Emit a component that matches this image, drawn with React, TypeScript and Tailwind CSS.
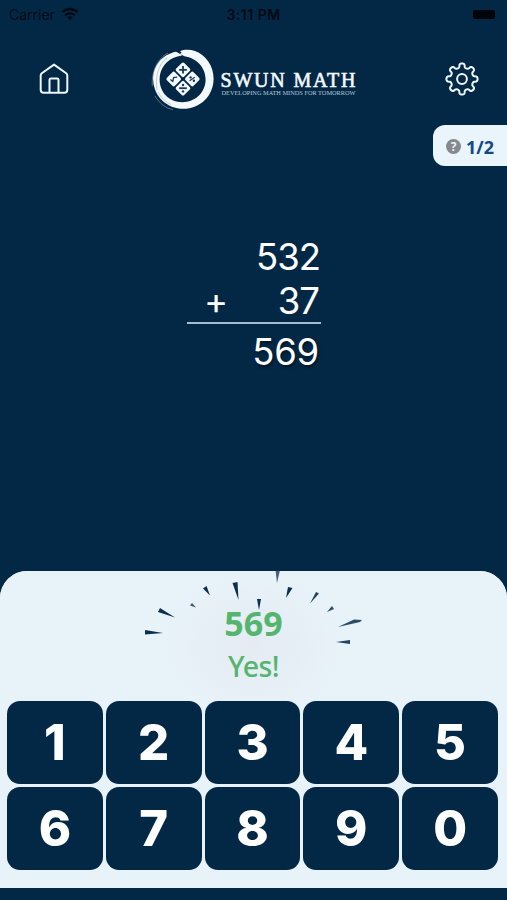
import React, { useState } from 'react';

interface Ray {
    points: string;
    opacity?: number;
}

// Burst marks around the answer, on a 250x130 canvas
const RAYS: Ray[] = [
    { points: '15,70 15,74.5 33,73' },
    { points: '30,48 28,52 45,57.5' },
    { points: '62,43 60,45.5 66,47.5', opacity: 0.8 },
    { points: '76.5,26 73,28.5 80,35.5' },
    { points: '107.5,22 102.5,23 108.5,40' },
    { points: '145.5,10 150,10 147,23', opacity: 0.75 },
    { points: '127,39 131,39 129,50' },
    { points: '158,27 162.5,28 156,38' },
    { points: '186,32 189,33.5 180,43.5', opacity: 0.9 },
    { points: '202,46 204,49 197,52', opacity: 0.85 },
    { points: '224,59.5 232,60 230,62 208,67', opacity: 0.85 },
    { points: '220,80 220,84 206,82', opacity: 0.9 },
];

const KEYS = ['1', '2', '3', '4', '5', '6', '7', '8', '9', '0'];

const gearPath = () => {
    const pts: string[] = [];
    for (let i = 0; i < 240; i++) {
        const t = (i / 240) * Math.PI * 2;
        const r = 13.5 + 2.1 * Math.cos(8 * t);
        const a = t + 0.045 * Math.sin(16 * t);
        pts.push(`${(17 + r * Math.sin(a)).toFixed(2)} ${(17 - r * Math.cos(a)).toFixed(2)}`);
    }
    return `M${pts.join('L')}Z`;
};

const HomeIcon = () => (
    <svg className="h-[34px] w-[34px]" viewBox="0 0 34 34" fill="none" stroke="#edf6fc" strokeWidth="2" strokeLinejoin="round">
        <path d="M17 2.6 29.2 11.2Q30.3 12 30.3 13.6V27.8Q30.3 30.7 27.4 30.7H6.6Q3.7 30.7 3.7 27.8V13.6Q3.7 12 4.8 11.2Z" />
        <path d="M12.5 30.5V17.8Q12.5 16.4 14 16.4H20Q21.5 16.4 21.5 17.8V30.5" />
    </svg>
);

const GearIcon = () => (
    <svg className="h-[34px] w-[34px]" viewBox="0 0 34 34" fill="none" stroke="#edf6fc" strokeWidth="2" strokeLinejoin="round">
        <path d={gearPath()} />
        <circle cx="17" cy="17" r="4.9" />
    </svg>
);

const WifiIcon = () => (
    <svg className="h-[14px] w-[18px]" viewBox="0 0 18 14" fill="none" stroke="#000a12">
        <path d="M1.2 5.2A11.2 11.2 0 0 1 16.8 5.2" strokeWidth="2.5" />
        <path d="M4.1 8.3A7 7 0 0 1 13.9 8.3" strokeWidth="2.2" />
        <path d="M6.3 10.6A3.8 3.8 0 0 1 11.7 10.6L9 13.3Z" fill="#000a12" stroke="none" />
    </svg>
);

const Logo = () => (
    <svg className="h-[64px] w-[208px]" viewBox="150 48 208 64">
        {/* Brush ring */}
        <path
            fill="#f4f9fd"
            d="M180 52.2C184 50.3 190 50.3 195 52C206 56 213.8 67 213.6 80C213.4 97 200 109.8 183.5 109.8C167 109.8 154 97.5 153.2 81.5C152.6 67 162 55.5 176 52.8L179 54.2L182 56.6L177.5 57.6C167 60 159.6 69.5 159.6 80.5C159.6 93.5 169.5 103.2 182.3 103.2C195 103.2 205.6 93.5 205.6 80.5C205.6 68.5 196.5 58.8 184.5 57.2L180 55L181.5 53.6Z"
        />
        <g fill="none" stroke="#022846" strokeWidth=".6" opacity=".35">
            <path d="M157 91C155 78 158 66 167 58.5" />
            <path d="M158 93C161 99 165.5 103 171 105.6" />
        </g>
        <g fill="none" stroke="#f4f9fd" strokeWidth=".7" opacity=".5">
            <path d="M152.3 87C151.3 74 156.5 60 168 54" />
            <path d="M155 97C159 104 166 109.5 173 110.5" />
        </g>
        <g fill="#f4f9fd">
            <rect x="-5.7" y="-5.7" width="11.4" height="11.4" rx="1.8" transform="translate(183 70.8) rotate(45)" />
            <rect x="-5.7" y="-5.7" width="11.4" height="11.4" rx="1.8" transform="translate(173.7 80) rotate(45)" />
            <rect x="-5.7" y="-5.7" width="11.4" height="11.4" rx="1.8" transform="translate(192.3 80) rotate(45)" />
            <rect x="-5.7" y="-5.7" width="11.4" height="11.4" rx="1.8" transform="translate(183 89.2) rotate(45)" />
        </g>
        <g fill="none" stroke="#16385a" strokeWidth="1.8">
            <path d="M183 67V74.6M179.2 70.8H186.8" />
            <path d="M170.4 80.4 172.8 82.4 173.6 78.6 177.2 78.2" strokeWidth="1.3" />
            <path d="M189.6 81.8 194.8 78.2" strokeWidth="1.2" />
            <path d="M179.2 89.2H186.8" />
        </g>
        <g fill="#16385a">
            <circle cx="183" cy="86" r="1.2" />
            <circle cx="183" cy="92.4" r="1.2" />
            <circle cx="190.6" cy="78.4" r="1.2" />
            <circle cx="193.9" cy="81.8" r="1.2" />
        </g>
        <text x="220.5" y="87.6" fontSize="20" fill="#f4f9fd" stroke="#f4f9fd" strokeWidth=".6" textLength="135" lengthAdjust="spacing" fontFamily="'Liberation Serif', serif">
            SWUN MATH
        </text>
        <text x="221.5" y="95.8" fontSize="5.6" fill="#b4c8da" textLength="134" lengthAdjust="spacingAndGlyphs" fontFamily="'Liberation Serif', serif">
            DEVELOPING MATH MINDS FOR TOMORROW
        </text>
    </svg>
);

const StatusBar = () => (
    <div className="grid h-[28px] grid-cols-3 items-center px-[9px] font-['Inter',sans-serif] text-[#000a12]">
        <div className="flex items-center gap-[6px]">
            <span className="text-[14px]">Carrier</span>
            <WifiIcon />
        </div>
        <span className="text-center text-[14px] font-semibold tracking-[0.5px]">3:11 PM</span>
        <div className="mr-[3px] h-[9px] w-[22px] justify-self-end rounded-[2px] bg-[#000509]" />
    </div>
);

const Problem = ({ answer }: { answer: string }) => (
    <div className="ml-[187px] w-[134px] font-['Inter',sans-serif] text-[36.5px] leading-[44px] font-normal tracking-[-1px] text-white">
        <div className="pt-px pr-px text-right">532</div>
        <div className="flex justify-between pr-[2px] pl-[17px]">
            <span>+</span>
            <span>37</span>
        </div>
        <div className="-mt-px h-[2px] bg-[#a9bccb]" />
        <div className="pt-[6px] pr-[2px] text-right tracking-[-0.2px] [text-shadow:1px_2px_3px_rgba(0,0,0,0.5)]">{answer}</div>
    </div>
);

const App: React.FC = () => {
    const [answer, setAnswer] = useState('569');

    const handleKey = (key: string) => {
        setAnswer(prev => (prev.length >= 3 ? key : prev + key));
    };

    return (
        <div className="flex h-[900px] w-[507px] flex-col overflow-hidden bg-[#022846]">
            <StatusBar />

            <header className="flex h-[97px] items-center justify-between pt-[5px] pr-[28px] pl-[37px]">
                <button aria-label="Home">
                    <HomeIcon />
                </button>
                <div className="mr-[9px]">
                    <Logo />
                </div>
                <button aria-label="Settings">
                    <GearIcon />
                </button>
            </header>

            {/* Question counter */}
            <div className="flex h-[41px] w-[74px] items-center gap-[5px] self-end rounded-l-[12px] bg-[#e9f4fb] pt-[2px] pl-[13px]">
                <span className="flex h-[15px] w-[15px] items-center justify-center rounded-full bg-[#85898d] font-['Noto_Sans',sans-serif] text-[12px] leading-none font-bold text-[#e9f4fb]">?</span>
                <span className="font-['Noto_Sans',sans-serif] text-[18px] leading-none font-bold text-[#134a85]">1/2</span>
            </div>

            <main className="flex-1 pt-[68px]">
                <Problem answer={answer} />
            </main>

            <section className="relative flex h-[317px] flex-col rounded-t-[27px] bg-[#e8f3f9]">
                <div className="flex h-[130px] flex-col items-center rounded-t-[27px] bg-[radial-gradient(ellipse_100px_80px_at_50%_75px,#e5ebf3,#e8f3f9)] pt-[30px] font-['Noto_Sans',sans-serif] text-[#55b56e]">
                    <span className="text-[34px] leading-[44px] font-bold">{answer}</span>
                    <span className="text-[28.5px] leading-[43px] font-medium tracking-[-0.6px]">Yes!</span>
                </div>
                <svg className="pointer-events-none absolute top-[-11px] left-[130px] h-[130px] w-[250px]" viewBox="0 0 250 130" fill="#0b2f50">
                    {RAYS.map(ray => (
                        <polygon key={ray.points} points={ray.points} opacity={ray.opacity ?? 1} />
                    ))}
                </svg>

                <div className="grid grid-cols-5 gap-[3px] pr-[9px] pl-[7px]">
                    {KEYS.map(key => (
                        <button
                            key={key}
                            onClick={() => handleKey(key)}
                            className="flex h-[83px] items-center justify-center rounded-[13px] bg-[#022846] font-['Inter',sans-serif] text-[49px] leading-none font-extrabold text-white"
                        >
                            {key}
                        </button>
                    ))}
                </div>
            </section>
            <div className="h-[12px]" />
        </div>
    );
};

export default App;
